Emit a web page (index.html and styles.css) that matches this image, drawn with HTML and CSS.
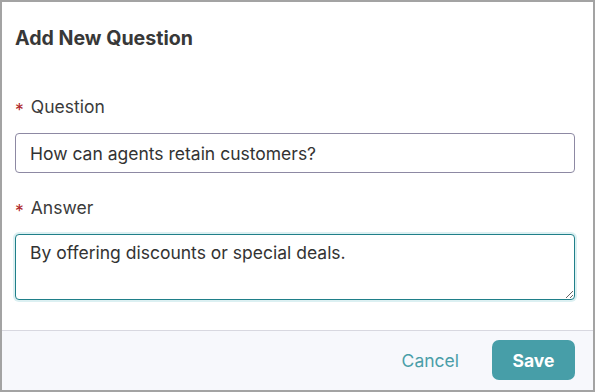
FILE: index.html
```html
<!DOCTYPE html>
<html>
<head>
<title>Add New Question</title>
<meta charset="UTF-8">
<link rel="stylesheet" href="styles.css">
</head>
<body>
  <div class="dialog">
    <div class="dialog-body">
      <h1 class="dialog-title">Add New Question</h1>

      <div class="field">
        <label class="field-label" for="question"><span class="required">*</span>Question</label>
        <input class="field-input" id="question" type="text" value="How can agents retain customers?">
      </div>

      <div class="field">
        <label class="field-label" for="answer"><span class="required">*</span>Answer</label>
        <textarea class="field-input field-textarea is-focused" id="answer">By offering discounts or special deals.</textarea>
      </div>
    </div>

    <div class="dialog-footer">
      <button class="btn btn-link">Cancel</button>
      <button class="btn btn-primary">Save</button>
    </div>
  </div>
</body>
</html>
```

FILE: styles.css
```css
html, body {
  margin: 0;
  padding: 0;
}
body {
  font-family: Inter, 'Noto Sans', sans-serif;
  color: #333;
  background-color: #fff;
}
.dialog {
  width: 595px;
  height: 392px;
  box-sizing: border-box;
  border: 2px solid #a3a3a3;
  display: flex;
  flex-direction: column;
  background-color: #fff;
}
.dialog-body {
  flex: 1;
  padding: 24px 18px 0 13px;
}
.dialog-title {
  margin: 0 0 45px;
  font-size: 19.6px;
  line-height: 24px;
  font-weight: 700;
  color: #383838;
}
.field {
  display: flex;
  flex-direction: column;
}
.field + .field {
  margin-top: 23px;
}
.field-label {
  font-size: 17.5px;
  line-height: 24px;
  height: 24px;
  color: #3b3b3b;
  margin-bottom: 14px;
}
.required {
  color: #b0292b;
  margin-right: 7px;
  vertical-align: -3px;
}
.field-input {
  font-family: inherit;
  font-size: 17.5px;
  color: #333;
  height: 40px;
  box-sizing: border-box;
  border: 1px solid #8d89a3;
  border-radius: 4px;
  padding: 0 14px;
  background-color: #fff;
  outline: none;
}
.field-textarea {
  height: 66px;
  padding: 6px 14px;
  line-height: 24px;
  resize: vertical;
}
/* Estado focado */
.field-textarea.is-focused {
  border-color: #1f7f89;
  box-shadow: 0 0 0 2px #dcf0f2;
}
.dialog-footer {
  height: 60px;
  box-sizing: border-box;
  border-top: 1px solid #d8d8e0;
  background-color: #f7f8fc;
  display: flex;
  justify-content: flex-end;
  align-items: center;
  gap: 16px;
  padding: 0 18px 1px 0;
}
.btn {
  font-family: inherit;
  font-size: 17.5px;
  height: 40px;
  border: none;
  border-radius: 7px;
  cursor: pointer;
}
.btn-link {
  background: none;
  color: #4a9ea8;
  padding: 0 17px;
}
.btn-primary {
  background-color: #479ea8;
  color: #fff;
  font-weight: 700;
  width: 83px;
  padding: 0;
}
```
